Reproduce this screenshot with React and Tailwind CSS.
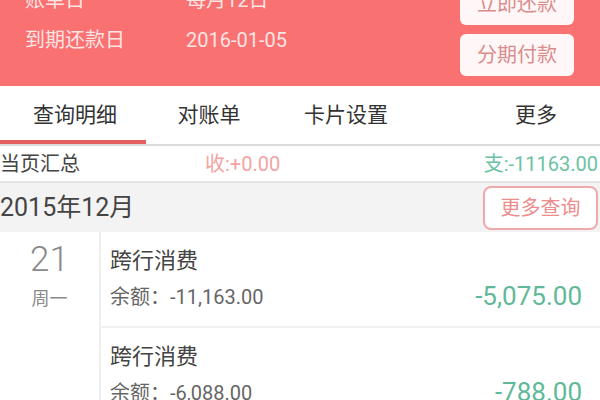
const font = { fontFamily: 'Roboto, "Noto Sans CJK SC", "Noto Sans", sans-serif' };

const items = [
  { title: "跨行消费", balance: "-11,163.00", amount: "-5,075.00" },
  { title: "跨行消费", balance: "-6,088.00", amount: "-788.00" },
];

const App = () => {
  return (
    <div className="w-[600px] h-[400px] overflow-hidden bg-white" style={font}>
      {/* header */}
      <div className="h-[86px] bg-[#f97171] overflow-hidden flex justify-between">
        <div className="flex flex-col gap-[12px] -mt-[14px] pl-[25px] text-[20px] leading-[28px] text-[#fde4e4]">
          <div className="flex">
            <span className="w-[161px]">账单日</span>
            <span>每月12日</span>
          </div>
          <div className="flex">
            <span className="w-[161px]">到期还款日</span>
            <span>2016-01-05</span>
          </div>
        </div>
        <div className="flex flex-col gap-[9px] -mt-[17px] pr-[26px]">
          <button className="w-[114px] h-[42px] rounded-[6px] bg-[#fff7f7] text-[20px] text-[#d98c8c]">
            立即还款
          </button>
          <button className="w-[114px] h-[42px] rounded-[6px] bg-[#fff7f7] text-[20px] text-[#d98c8c]">
            分期付款
          </button>
        </div>
      </div>

      {/* tabs */}
      <div className="h-[60px] flex border-b-2 border-[#dcdcdc] text-[21px] text-[#333]">
        <div className="w-[146px] flex flex-col">
          <div className="flex-1 flex items-center justify-center pl-[4px] pt-[6px]">查询明细</div>
          <div className="h-[4px] bg-[#e35f5f]"></div>
        </div>
        <div className="w-[126px] flex items-center justify-center pt-[2px]">对账单</div>
        <div className="w-[148px] flex items-center justify-center pt-[2px]">卡片设置</div>
        <div className="flex-1 flex items-center pl-[95px] pt-[2px]">更多</div>
      </div>

      {/* summary */}
      <div className="h-[37px] flex items-center border-b-2 border-[#e4e4e4] text-[20px]">
        <span className="w-[205px] text-[#444]">当页汇总</span>
        <span className="text-[#f3a3a3]">收:+0.00</span>
        <span className="ml-auto pr-[2px] text-[#6cc2a2]">支:-11163.00</span>
      </div>

      {/* month */}
      <div className="h-[49px] bg-[#f3f3f3] flex items-center justify-between">
        <span className="text-[25px] text-[#444]">2015年12月</span>
        <button className="w-[115px] h-[44px] mr-[2px] rounded-[8px] border-2 border-[#eeaaaa] bg-white text-[20px] text-[#ee8d8d]">
          更多查询
        </button>
      </div>

      {/* list */}
      <div className="flex">
        <div className="w-[101px] border-r-2 border-[#efefef] flex flex-col items-center pt-[6px] text-[#8a8a8a]">
          <span className="text-[35px] leading-[44px] font-light">21</span>
          <span className="text-[18px] leading-[26px] mt-[4px]">周一</span>
        </div>
        <div className="flex-1 flex flex-col">
          {items.map((it, i) => (
            <div
              key={i}
              className="h-[96px] flex items-end justify-between pl-[9px] pr-[18px] pb-[13px] border-b-2 border-[#f0f0f0]"
            >
              <div className="flex flex-col">
                <span className="text-[22px] leading-[34px] text-[#444] mb-[3px]">{it.title}</span>
                <span className="text-[20px] leading-[32px] text-[#666]">余额：{it.balance}</span>
              </div>
              <span className="text-[26px] leading-[34px] text-[#5fb998]">{it.amount}</span>
            </div>
          ))}
        </div>
      </div>
    </div>
  );
};

export default App;
